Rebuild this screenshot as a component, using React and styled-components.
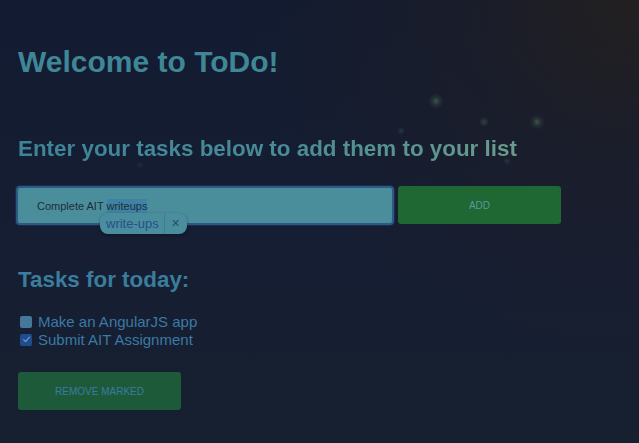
import styled, { createGlobalStyle } from "styled-components";

const GlobalStyle = createGlobalStyle`
  html, body {
    margin: 0;
    padding: 0;
    height: 100%;
  }
  body {
    font-family: "Liberation Sans", Arial, sans-serif;
    background: #141c31;
  }
`;

const Page = styled.div`
  width: 639px;
  height: 443px;
  overflow: hidden;
  box-sizing: border-box;
  padding: 45px 0 0 18px;
  background:
    radial-gradient(circle at 436px 101px, rgba(110, 170, 120, 0.4) 0, rgba(110, 170, 120, 0.12) 4px, transparent 8px),
    radial-gradient(circle at 484px 122px, rgba(110, 160, 120, 0.28) 0, transparent 5px),
    radial-gradient(circle at 537px 122px, rgba(120, 170, 120, 0.38) 0, rgba(120, 170, 120, 0.1) 4px, transparent 8px),
    radial-gradient(circle at 401px 131px, rgba(90, 130, 150, 0.25) 0, transparent 4px),
    radial-gradient(circle at 507px 161px, rgba(90, 130, 150, 0.22) 0, transparent 4px),
    radial-gradient(circle at 140px 165px, rgba(90, 130, 150, 0.15) 0, transparent 4px),
    radial-gradient(ellipse 400px 360px at 639px 0px, rgba(36, 32, 30, 0.9) 0, rgba(32, 30, 36, 0.5) 45%, transparent 100%),
    linear-gradient(180deg, #121b31 0%, #161e33 60%, #17202f 100%);
`;

const Title = styled.h1`
  margin: 0;
  font-size: 30px;
  line-height: 34px;
  font-weight: bold;
  color: #3f8796;
`;

const Subtitle = styled.h2`
  margin: 57px 0 0;
  font-size: 22.4px;
  line-height: 26px;
  font-weight: bold;
  background: linear-gradient(90deg, #3d8499 0%, #4a8c96 55%, #6a9c8c 100%);
  -webkit-background-clip: text;
  background-clip: text;
  color: transparent;
  width: fit-content;
`;

const EntryRow = styled.div`
  display: flex;
  gap: 4px;
  margin-top: 24px;
  margin-left: -2px;
`;

const InputWrap = styled.div`
  position: relative;
`;

const TaskInput = styled.div`
  box-sizing: border-box;
  width: 378px;
  height: 39px;
  border: 2px solid #2c5a83;
  border-radius: 4px;
  background: #4a8d9b;
  padding-left: 19px;
  display: flex;
  align-items: center;
  font-size: 11px;
  color: #1d2e3c;
  box-shadow: 0 0 0 1px rgba(30, 60, 110, 0.5);
`;

const Marked = styled.span`
  background: #3f82a4;
  padding: 1px 0;
`;

const Suggestion = styled.div`
  position: absolute;
  left: 84px;
  top: 27px;
  display: flex;
  align-items: stretch;
  height: 21px;
  border-radius: 8px;
  background: #4a8d9d;
  box-shadow: 0 1px 3px rgba(0, 0, 0, 0.35);
  font-size: 13px;
  color: #27508a;
`;

const SuggestionWord = styled.span`
  display: flex;
  align-items: center;
  padding: 0 5px 0 6px;
  border-right: 1px solid #407d90;
`;

const SuggestionClose = styled.span`
  display: flex;
  align-items: center;
  padding: 0 7px 0 6px;
  font-size: 11px;
  color: #284e6a;
`;

const GreenButton = styled.button`
  box-sizing: border-box;
  width: ${(p) => p.$width}px;
  height: ${(p) => p.$height}px;
  border: none;
  border-radius: 3px;
  background: ${(p) => p.$bg};
  color: ${(p) => p.$fg};
  font-family: "Liberation Sans", Arial, sans-serif;
  font-size: 10px;
  padding: 0;
`;

const SectionTitle = styled.h3`
  margin: 42px 0 0;
  font-size: 22.4px;
  line-height: 26px;
  font-weight: bold;
  color: #3a7d9c;
`;

const TaskList = styled.ul`
  list-style: none;
  margin: 20px 0 0;
  padding: 0 0 0 2px;
  display: flex;
  flex-direction: column;
  gap: 1px;
`;

const TaskItem = styled.li`
  display: flex;
  align-items: center;
  gap: 6px;
  font-size: 15px;
  line-height: 17px;
  color: #3a7aa4;
`;

const Box = styled.span`
  box-sizing: border-box;
  width: 12px;
  height: 12px;
  border-radius: 2px;
  background: ${(p) => (p.$checked ? "#1f4c8c" : "#457898")};
  display: flex;
  align-items: center;
  justify-content: center;
`;

const Bottom = styled.div`
  margin-top: 24px;
`;

const tasks = [
  { label: "Make an AngularJS app", done: false },
  { label: "Submit AIT Assignment", done: true },
];

const App = () => (
  <>
    <GlobalStyle />
    <Page>
      <Title>Welcome to ToDo!</Title>
      <Subtitle>Enter your tasks below to add them to your list</Subtitle>
      <EntryRow>
        <InputWrap>
          <TaskInput>
            <span>
              Complete AIT <Marked>writeups</Marked>
            </span>
          </TaskInput>
          <Suggestion>
            <SuggestionWord>write-ups</SuggestionWord>
            <SuggestionClose>✕</SuggestionClose>
          </Suggestion>
        </InputWrap>
        <GreenButton $width={163} $height={38} $bg="#1f6733" $fg="#5b9a98">
          ADD
        </GreenButton>
      </EntryRow>
      <SectionTitle>Tasks for today:</SectionTitle>
      <TaskList>
        {tasks.map((t) => (
          <TaskItem key={t.label}>
            <Box $checked={t.done}>
              {t.done && (
                <svg width="9" height="9" viewBox="0 0 10 10">
                  <path
                    d="M1.8 5.2 L4 7.4 L8.3 2.4"
                    fill="none"
                    stroke="#6e9fd6"
                    strokeWidth="1.3"
                    strokeLinecap="round"
                    strokeLinejoin="round"
                  />
                </svg>
              )}
            </Box>
            {t.label}
          </TaskItem>
        ))}
      </TaskList>
      <Bottom>
        <GreenButton $width={163} $height={38} $bg="#1d5a39" $fg="#3a7aa6">
          REMOVE MARKED
        </GreenButton>
      </Bottom>
    </Page>
  </>
);

export default App;
